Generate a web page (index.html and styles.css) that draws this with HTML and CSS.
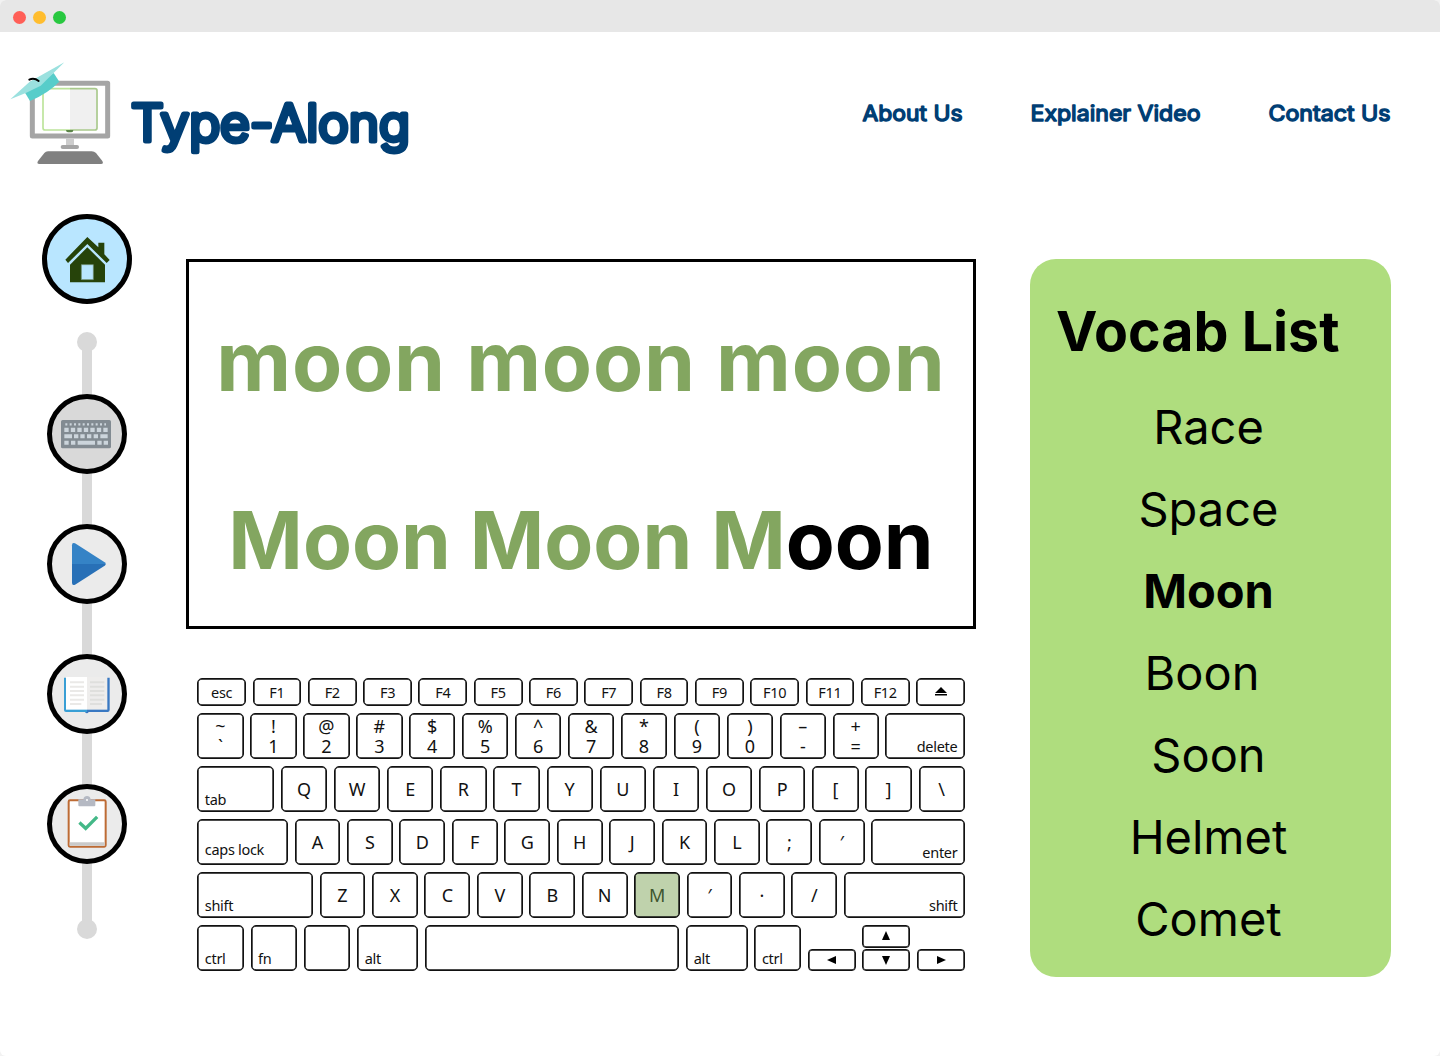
FILE: index.html
```html
<!DOCTYPE html>
<html lang="en">
<head>
<meta charset="utf-8">
<title>Type-Along</title>
<link rel="stylesheet" href="styles.css">
</head>
<body>
<div class="window">
  <div class="titlebar"><span class="light red"></span><span class="light amber"></span><span class="light green"></span></div>
  <header class="header">
    <div class="brand">
      <svg class="logo" width="130" height="125" viewBox="0 0 390 375">
        <rect x="97" y="100" width="226" height="158" fill="#fff" stroke="#a5a5a5" stroke-width="15" stroke-linejoin="round"/>
        <rect x="210" y="116" width="82" height="124" fill="#f0f0f0"/>
        <path d="M210 116H134q-5 0-5 5v112q0 7 7 7h74" fill="none" stroke="#bce49a" stroke-width="5"/>
        <path d="M210 116h75q6 0 6 6v112q0 6-6 6h-75" fill="none" stroke="#a9c98c" stroke-width="5"/>
        <path d="M198 240h22q0 7-6 7h-10q-6 0-6-7z" fill="#5c8549"/>
        <rect x="198" y="265" width="24" height="23" fill="#cdcdcd"/>
        <rect x="182" y="285" width="55" height="12" rx="6" fill="#a5a5a5"/>
        <path d="M144 304h131q8 0 13 5l19 24q5 9-4 9H118q-9 0-4-9l19-24q4-5 11-5z" fill="#808080"/>
        <path d="M75 128l86-59 17 26q-34 35-88 58z" fill="#57cdca"/>
        <path d="M31 148l58-53 104-58-71 70-43 21z" fill="#9be1df"/>
        <path d="M88 89q14-7 28 4" fill="none" stroke="#000" stroke-width="6" stroke-linecap="round"/>
      </svg>
      <svg class="wordmark" width="290" height="80"><text x="1" y="59.500" textLength="279" lengthAdjust="spacingAndGlyphs">Type-Along</text></svg>
    </div>
    <nav class="nav">
      <svg width="102" height="34"><text x="2.500" y="23" textLength="100" lengthAdjust="spacingAndGlyphs">About Us</text></svg>
      <svg width="172" height="34"><text x="1.500" y="23" textLength="170" lengthAdjust="spacingAndGlyphs">Explainer Video</text></svg>
      <svg width="124" height="34"><text x="0.500" y="23" textLength="122" lengthAdjust="spacingAndGlyphs">Contact Us</text></svg>
    </nav>
  </header>
  <main class="main">
    <aside class="rail">
      <a class="step home"><svg width="80" height="80" viewBox="0 0 240 240"><path d="M55 137L121 69l33 31V86h18v35l16 17-9 9-58-57-58 57z" fill="#26430a"/><path d="M121 100l53 52v53H69v-53z" fill="#26430a"/><path d="M103 152h36v45h-36z" fill="#b9e6ff" stroke="#6f8e70" stroke-width="2"/></svg></a>
      <div class="track">
        <span class="dot"></span>
        <a class="step keys"><svg width="70" height="70" viewBox="0 0 210 210"><rect x="27" y="63" width="150" height="85" rx="5" fill="#828b92"/><g stroke="#ccd5dc" fill="none"><path d="M40 76h122" stroke-width="7" stroke-dasharray="6 7"/><path d="M37 92.500h130" stroke-width="13" stroke-dasharray="13 6.500"/><path d="M37 112h23m6 0h13m6 0h13m7 0h13m7 0h13m7 0h22M37 131h13m7 0h13m7 0h52m7 0h13m6 0h13" stroke-width="12"/></g></svg></a>
        <a class="step"><svg width="70" height="70" viewBox="0 0 210 210"><path d="M60 105V49q0-10 9-6l89 57q4 3 3 5z" fill="#3583c6"/><path d="M60 105v56q0 10 9 6l89-57q4-3 3-5z" fill="#2870b7"/></svg></a>
        <a class="step"><svg width="70" height="70" viewBox="0 0 210 210"><path d="M36 56h70v103H42q-6 0-6-6z" fill="#399fd5"/><path d="M105 56h68v97q0 6-6 6h-57q-2 4-5 4-4 0-6-4h6z" fill="#3978c2"/><path d="M42 54h63v98H42z" fill="#fff"/><path d="M105 54h61v98h-61z" fill="#eeedec"/><path d="M54 70h42M54 83h42M54 96h42M54 109h42M54 122h42M54 135h34" stroke="#eae9e7" stroke-width="6"/><path d="M114 70h43M114 83h43M114 96h43M114 109h43M114 122h43M114 135h36" stroke="#dfdfdd" stroke-width="6"/></svg></a>
        <a class="step"><svg width="70" height="70" viewBox="0 0 210 210"><rect x="50" y="34" width="111" height="139" rx="4" fill="#fff" stroke="#bd6b34" stroke-width="6"/><path d="M53 160h105v10H53z" fill="#cacaca"/><path d="M79 31h15q2-10 11-10t11 10h14v18q0 3-3 3H82q-3 0-3-3z" fill="#b5b9c3"/><circle cx="105" cy="33" r="3" fill="#fff"/><path d="M86 104l15 14 31-31" fill="none" stroke="#43b887" stroke-width="10" stroke-linecap="square"/></svg></a>
        <span class="dot"></span>
      </div>
    </aside>
    <section class="practice">
      <div class="screen">
        <p class="line first">moon moon moon</p>
        <p class="line second">Moon Moon M<span class="todo">oon</span></p>
      </div>
      <div class="keyboard">
        <div class="row fn-row"><kbd>esc</kbd><kbd>F1</kbd><kbd>F2</kbd><kbd>F3</kbd><kbd>F4</kbd><kbd>F5</kbd><kbd>F6</kbd><kbd>F7</kbd><kbd>F8</kbd><kbd>F9</kbd><kbd>F10</kbd><kbd>F11</kbd><kbd>F12</kbd><kbd><svg width="14" height="10"><path d="M7 0l6 6H1zM1 7h12v1.500H1z"/></svg></kbd></div>
        <div class="row pairs"><kbd><b>~</b><b>`</b></kbd><kbd><b>!</b><b>1</b></kbd><kbd><b>@</b><b>2</b></kbd><kbd><b>#</b><b>3</b></kbd><kbd><b>$</b><b>4</b></kbd><kbd><b>%</b><b>5</b></kbd><kbd><b>^</b><b>6</b></kbd><kbd><b>&amp;</b><b>7</b></kbd><kbd><b>*</b><b>8</b></kbd><kbd><b>(</b><b>9</b></kbd><kbd><b>)</b><b>0</b></kbd><kbd><b>–</b><b>-</b></kbd><kbd><b>+</b><b>=</b></kbd><kbd class="wide end">delete</kbd></div>
        <div class="row tab-row"><kbd class="wide">tab</kbd><kbd>Q</kbd><kbd>W</kbd><kbd>E</kbd><kbd>R</kbd><kbd>T</kbd><kbd>Y</kbd><kbd>U</kbd><kbd>I</kbd><kbd>O</kbd><kbd>P</kbd><kbd>[</kbd><kbd>]</kbd><kbd>\</kbd></div>
        <div class="row letters"><kbd class="wide caps">caps lock</kbd><kbd>A</kbd><kbd>S</kbd><kbd>D</kbd><kbd>F</kbd><kbd>G</kbd><kbd>H</kbd><kbd>J</kbd><kbd>K</kbd><kbd>L</kbd><kbd>;</kbd><kbd>′</kbd><kbd class="wide end">enter</kbd></div>
        <div class="row letters"><kbd class="wide shift">shift</kbd><kbd>Z</kbd><kbd>X</kbd><kbd>C</kbd><kbd>V</kbd><kbd>B</kbd><kbd>N</kbd><kbd class="active">M</kbd><kbd>′</kbd><kbd>·</kbd><kbd>/</kbd><kbd class="wide end">shift</kbd></div>
        <div class="row bottom-row"><kbd class="mod">ctrl</kbd><kbd class="mod">fn</kbd><kbd></kbd><kbd class="mod alt">alt</kbd><kbd class="wide"></kbd><kbd class="mod alt">alt</kbd><kbd class="mod">ctrl</kbd>
          <div class="arrows"><kbd><svg width="10" height="10"><path d="M9 1v8L0 5z"/></svg></kbd><div class="updown"><kbd><svg width="10" height="10"><path d="M1 9h8L5 0z"/></svg></kbd><kbd><svg width="10" height="10"><path d="M1 1h8L5 10z"/></svg></kbd></div><kbd><svg width="10" height="10"><path d="M1 1v8l9-4z"/></svg></kbd></div>
        </div>
      </div>
    </section>
    <section class="vocab">
      <h2>Vocab List</h2>
      <ul><li>Race</li><li>Space</li><li class="current">Moon</li><li class="boon">Boon</li><li>Soon</li><li>Helmet</li><li>Comet</li></ul>
    </section>
  </main>
</div>
</body>
</html>
```
FILE: styles.css
```css
* { box-sizing: border-box; }
body { margin: 0; background: #f2f2f2; font-family: Inter, Roboto, sans-serif; color: #000; }
.window { width: 1440px; height: 1056px; background: #fff; border-radius: 6px; overflow: hidden; }
.titlebar { height: 32px; background: #e7e7e7; display: flex; align-items: center; gap: 7px; padding: 2px 0 0 13px; }
.light { width: 13px; height: 13px; border-radius: 50%; }
.red { background: #ff5f57; }
.amber { background: #ffbd2e; }
.green { background: #28c840; }

.header { height: 182px; display: flex; justify-content: space-between; padding: 18px 48px 0 0; }
.brand { display: flex; gap: 0; }
.wordmark { margin-top: 31px; }
.header svg { display: block; overflow: visible; }
.header text { font-family: Inter, sans-serif; fill: #003e74; stroke: #003e74; stroke-linejoin: round; }
.wordmark text { font-size: 50px; font-weight: 300; stroke-width: 5px; }
.nav { display: flex; gap: 67px; padding-top: 48px; }
.nav text { font-size: 21.500px; font-weight: 400; stroke-width: 1.400px; }

.main { display: flex; align-items: flex-start; }
.rail { width: 90px; margin-left: 42px; display: flex; flex-direction: column; align-items: center; }
.step { width: 80px; height: 80px; border: 5px solid #000; border-radius: 50%; background: #ebebeb; display: block; }
.step svg { display: block; }
.home { width: 90px; height: 90px; background: #b9e6ff; }
.home svg { transform: translate(0, -5px); }
.keys { background: #d9d9d9; }
.track { margin-top: 28px; display: flex; flex-direction: column; align-items: center; height: 607px; background: linear-gradient(#d9d9d9, #d9d9d9) center 10px / 10px 587px no-repeat; }
.track .step { margin-bottom: 50px; flex: none; }
.dot { width: 20px; height: 20px; border-radius: 50%; background: #d9d9d9; }
.dot:first-child { margin-bottom: 42px; }
.dot:last-child { margin-top: 5px; }

.practice { width: 790px; margin: 45px 0 0 54px; }
.screen { height: 370px; border: 3px solid #000; padding-top: 50px; }
.line { margin: 0; text-align: center; font-size: 80px; line-height: 100px; font-weight: 680; color: #83a660; white-space: pre; }
.first { font-size: 82px; letter-spacing: 0.800px; }
.second { margin-top: 78px; }
.todo { color: #000; }

.keyboard { width: 767.600px; margin: 49px 0 0 11.300px; display: flex; flex-direction: column; gap: 6.700px; }
.row { display: flex; gap: 6.560px; height: 46.400px; }
kbd { width: 46.400px; flex: none; border: 1px solid #111; box-shadow: inset 0 0 0 0.700px #111; border-radius: 5px; display: flex; align-items: center; justify-content: center; font: 18px "Noto Sans", sans-serif; color: #111; }
.fn-row { height: 28px; }
.fn-row kbd { width: auto; flex: 1; font-size: 14.500px; letter-spacing: -0.300px; padding-bottom: 1px; }
.tab-row { gap: 6.750px; }
.bottom-row { gap: 6.900px; }
.letters kbd { width: 45.900px; }
.row .wide { width: auto; flex: 1; }
.row .wide, .row .mod { justify-content: flex-start; align-items: flex-end; padding: 0 6.500px 2px; font-size: 14.500px; letter-spacing: -0.300px; }
.row .end { justify-content: flex-end; }
.row .caps { flex: none; width: 90.700px; padding-bottom: 5px; }
.row .shift { flex: none; width: 115.700px; }
.pairs kbd { flex-direction: column; }
.pairs .wide { flex-direction: row; }
.pairs b { font-weight: 400; line-height: 20px; }
.row .alt { width: 61.300px; }
.active { background: #bfd2ac; color: #40562f; }
.arrows { display: flex; gap: 6.600px; align-items: flex-end; }
.arrows kbd { width: 48px; height: 22.500px; border-radius: 4px; }
.updown { display: flex; flex-direction: column; gap: 1.400px; }

.vocab { width: 361px; height: 718px; margin: 45px 0 0 54px; border-radius: 26px; background: #afdd7e; padding-top: 37px; }
.vocab h2 { margin: 0 0 0 26px; font-size: 55.500px; line-height: 70px; font-weight: 650; white-space: nowrap; }
.vocab ul { list-style: none; margin: 20px 0 0; padding: 0 4px 0 0; text-align: center; font-size: 47px; line-height: 82px; }
.current { font-weight: 700; }
.boon { padding-right: 13px; }
```
